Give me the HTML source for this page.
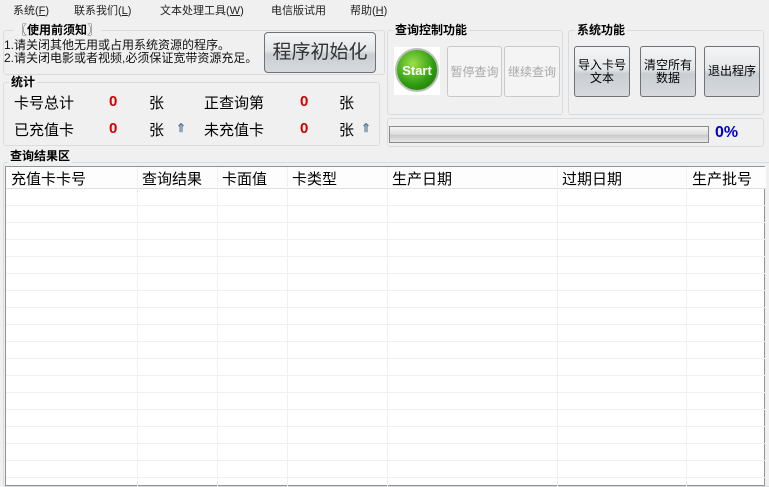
<!DOCTYPE html>
<html><head><meta charset="utf-8"><style>
*{margin:0;padding:0;box-sizing:border-box}
body{width:769px;height:481px;background:#f0f0f0;font-family:"Liberation Sans","Noto Sans CJK SC",sans-serif;font-size:12px;color:#000;position:relative;overflow:hidden}
.a{position:absolute;white-space:nowrap}
.g{position:absolute;border:1px solid #d8dcdf;border-radius:3px}
.lbl{position:absolute;background:#f0f0f0;font-weight:bold;font-size:12px;padding:0 2px;line-height:14px}
.btn{position:absolute;border:1px solid #6d7377;border-radius:3px;background:linear-gradient(#f4f5f6 0%,#e3e6e9 45%,#c9ced3 55%,#d6dadf 100%);text-align:center;font-size:12px;line-height:13px;display:flex;align-items:center;justify-content:center}
.dis{position:absolute;border:1px solid #c9c9c9;border-radius:3px;background:#f4f4f4;color:#a8a8a8;font-size:12px;display:flex;align-items:center;justify-content:center}
.red{color:#d00000;font-weight:bold}
.s{font-size:15px}
</style></head><body>
<div class="a" style="left:13px;top:2px;font-size:11px;color:#222">系统(<u>F</u>)</div>
<div class="a" style="left:74px;top:2px;font-size:11px;color:#222">联系我们(<u>L</u>)</div>
<div class="a" style="left:160px;top:2px;font-size:11px;color:#222">文本处理工具(<u>W</u>)</div>
<div class="a" style="left:271px;top:2px;font-size:11px;color:#222">电信版试用</div>
<div class="a" style="left:350px;top:2px;font-size:11px;color:#222">帮助(<u>H</u>)</div>

<div class="g" style="left:3px;top:30px;width:382px;height:45px"></div>
<div class="lbl" style="left:13px;top:23px">〖使用前须知〗</div>
<div class="a" style="left:4px;top:39px;font-size:12px;line-height:13px;color:#111">1.请关闭其他无用或占用系统资源的程序。<br>2.请关闭电影或者视频,必须保证宽带资源充足。</div>
<div class="btn" style="left:264px;top:32px;width:112px;height:41px;font-size:19px;color:#333;border-radius:4px">程序初始化</div>

<div class="g" style="left:3px;top:82px;width:377px;height:64px"></div>
<div class="lbl" style="left:9px;top:75px">统计</div>
<div class="a s" style="left:14px;top:92px">卡号总计</div>
<div class="a red s" style="left:109px;top:93px">0</div>
<div class="a s" style="left:149px;top:92px">张</div>
<div class="a s" style="left:204px;top:92px">正查询第</div>
<div class="a red s" style="left:300px;top:93px">0</div>
<div class="a s" style="left:339px;top:92px">张</div>
<div class="a s" style="left:14px;top:119px">已充值卡</div>
<div class="a red s" style="left:109px;top:120px">0</div>
<div class="a s" style="left:149px;top:119px">张</div>
<div class="a" style="left:176px;top:121px;width:12px;height:13px;color:#5a7d99;font-size:12px;font-weight:bold">⇑</div>
<div class="a s" style="left:204px;top:119px">未充值卡</div>
<div class="a red s" style="left:300px;top:120px">0</div>
<div class="a s" style="left:339px;top:119px">张</div>
<div class="a" style="left:361px;top:121px;width:12px;height:13px;color:#5a7d99;font-size:12px;font-weight:bold">⇑</div>

<div class="g" style="left:387px;top:30px;width:176px;height:85px"></div>
<div class="lbl" style="left:393px;top:23px">查询控制功能</div>
<div class="a" style="left:394px;top:47px;width:46px;height:48px;background:#fff"></div>
<div class="a" style="left:395px;top:48px;width:44px;height:44px;border-radius:50%;background:radial-gradient(circle at 40% 35%,#9be04a,#2c9a10 60%,#1d6a08);border:2px solid #b9c0b5;color:#fff;font-weight:bold;font-size:13px;display:flex;align-items:center;justify-content:center">Start</div>
<div class="dis" style="left:447px;top:46px;width:55px;height:51px">暂停查询</div>
<div class="dis" style="left:504px;top:46px;width:56px;height:51px">继续查询</div>

<div class="g" style="left:568px;top:30px;width:196px;height:85px"></div>
<div class="lbl" style="left:575px;top:23px">系统功能</div>
<div class="btn" style="left:574px;top:46px;width:56px;height:51px">导入卡号<br>文本</div>
<div class="btn" style="left:640px;top:46px;width:56px;height:51px">清空所有<br>数据</div>
<div class="btn" style="left:704px;top:46px;width:56px;height:51px">退出程序</div>

<div class="g" style="left:387px;top:118px;width:377px;height:29px"></div>
<div class="a" style="left:389px;top:126px;width:320px;height:17px;border:1px solid #8a8a8a;background:linear-gradient(#f6f6f6,#dcdcdc 50%,#c9c9c9 55%,#e8e8e8)"></div>
<div class="a" style="left:715px;top:124px;color:#0000c8;font-weight:bold;font-size:16px">0%</div>

<div class="g" style="left:3px;top:162px;width:770px;height:325px"></div>
<div class="lbl" style="left:8px;top:149px">查询结果区</div>
<div class="a" style="left:5px;top:166px;width:760px;height:320px;background:#fff;border:1px solid #8e9599">
<svg width="760" height="320" style="position:absolute;left:0;top:0">
<rect x="0" y="0" width="760" height="21" fill="#fdfdfd"/>
<line x1="0" y1="21.5" x2="760" y2="21.5" stroke="#e0e0e0"/>
<g stroke="#f0f0f0">
<line x1="0" y1="38.5" x2="760" y2="38.5"/><line x1="0" y1="55.5" x2="760" y2="55.5"/><line x1="0" y1="72.5" x2="760" y2="72.5"/><line x1="0" y1="89.5" x2="760" y2="89.5"/><line x1="0" y1="106.5" x2="760" y2="106.5"/><line x1="0" y1="123.5" x2="760" y2="123.5"/><line x1="0" y1="140.5" x2="760" y2="140.5"/><line x1="0" y1="157.5" x2="760" y2="157.5"/><line x1="0" y1="174.5" x2="760" y2="174.5"/><line x1="0" y1="191.5" x2="760" y2="191.5"/><line x1="0" y1="208.5" x2="760" y2="208.5"/><line x1="0" y1="225.5" x2="760" y2="225.5"/><line x1="0" y1="242.5" x2="760" y2="242.5"/><line x1="0" y1="259.5" x2="760" y2="259.5"/><line x1="0" y1="276.5" x2="760" y2="276.5"/><line x1="0" y1="293.5" x2="760" y2="293.5"/><line x1="0" y1="310.5" x2="760" y2="310.5"/>
<line x1="131.5" y1="0" x2="131.5" y2="320"/><line x1="211.5" y1="0" x2="211.5" y2="320"/><line x1="281.5" y1="0" x2="281.5" y2="320"/><line x1="381.5" y1="0" x2="381.5" y2="320"/><line x1="551.5" y1="0" x2="551.5" y2="320"/><line x1="680.5" y1="0" x2="680.5" y2="320"/>
</g></svg>
<div class="a" style="left:5px;top:1px;font-size:15px">充值卡卡号</div>
<div class="a" style="left:136px;top:1px;font-size:15px">查询结果</div>
<div class="a" style="left:216px;top:1px;font-size:15px">卡面值</div>
<div class="a" style="left:286px;top:1px;font-size:15px">卡类型</div>
<div class="a" style="left:386px;top:1px;font-size:15px">生产日期</div>
<div class="a" style="left:556px;top:1px;font-size:15px">过期日期</div>
<div class="a" style="left:686px;top:1px;font-size:15px">生产批号</div>
</div>
</body></html>
